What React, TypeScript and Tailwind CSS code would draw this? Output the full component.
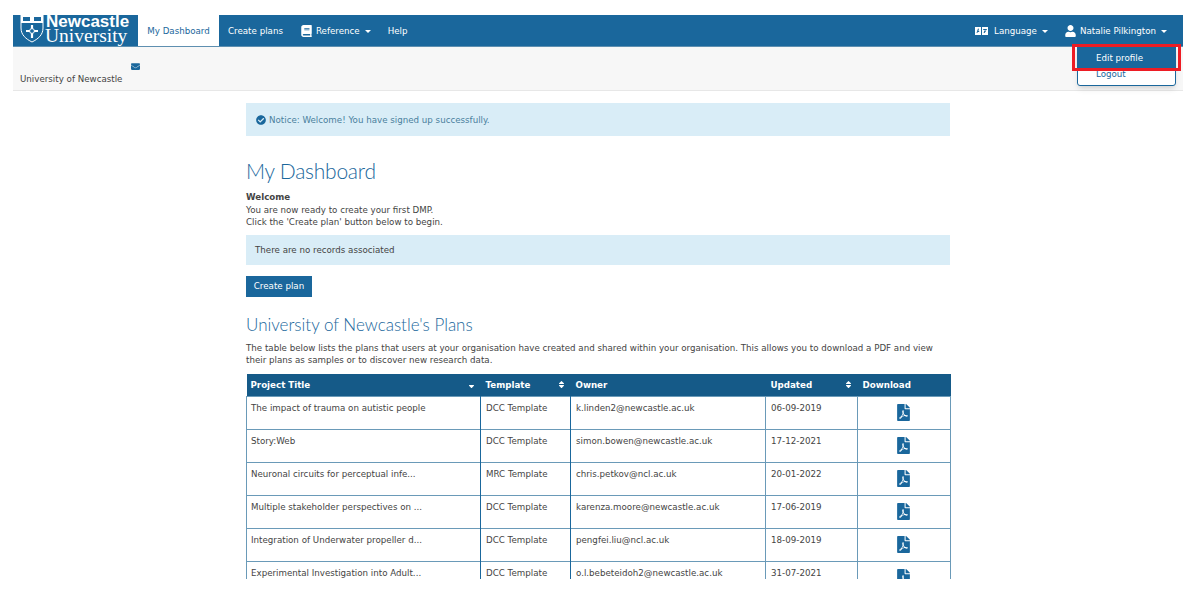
import { FaBook, FaCheckCircle, FaEnvelope, FaFilePdf, FaSort, FaSortDown, FaUser } from 'react-icons/fa';

const rows = [
  { title: 'The impact of trauma on autistic people', template: 'DCC Template', owner: 'k.linden2@newcastle.ac.uk', updated: '06-09-2019' },
  { title: 'Story:Web', template: 'DCC Template', owner: 'simon.bowen@newcastle.ac.uk', updated: '17-12-2021' },
  { title: 'Neuronal circuits for perceptual infe...', template: 'MRC Template', owner: 'chris.petkov@ncl.ac.uk', updated: '20-01-2022' },
  { title: 'Multiple stakeholder perspectives on ...', template: 'DCC Template', owner: 'karenza.moore@newcastle.ac.uk', updated: '17-06-2019' },
  { title: 'Integration of Underwater propeller d...', template: 'DCC Template', owner: 'pengfei.liu@ncl.ac.uk', updated: '18-09-2019' },
  { title: 'Experimental Investigation into Adult...', template: 'DCC Template', owner: 'o.l.bebeteidoh2@newcastle.ac.uk', updated: '31-07-2021' },
];

function Caret() {
  return <span className="ml-[5px] inline-block border-x-[3px] border-t-[3px] border-x-transparent border-t-white align-middle" />;
}

function LanguageIcon() {
  return (
    <svg className="mr-[6px]" width="13" height="8" viewBox="0 0 13 8">
      <path fillRule="evenodd" fill="white" d="M0 0H6V8H0ZM3 1.5 1.5 6H2.4L2.7 5H4.3L3.6 1.5ZM3 4 3.3 2.8 3.7 4Z" />
      <path fillRule="evenodd" fill="white" d="M7 0H13V8H7ZM8.2 2V3H11.8V2ZM9.4 3.5 8.6 6H9.6L11.4 3.5Z" />
    </svg>
  );
}

function Logo() {
  return (
    <div className="relative h-full w-[125px] shrink-0 overflow-hidden bg-[#1a679c] text-white">
      <svg className="absolute left-[7px] top-[-1px]" width="24" height="29" viewBox="0 0 24 29" fill="none">
        <path d="M1 1H23V14C23 21 18 25 12 28C6 25 1 21 1 14Z" stroke="white" strokeWidth="1" />
        <rect x="1" y="1" width="22" height="8" fill="white" />
        <path d="M3 3H10V7H3ZM14 3H21V7H14Z" fill="#1a679c" />
        <path d="M12 11V24M6 17H18" stroke="white" strokeWidth="2.2" />
        <circle cx="12" cy="17" r="2.4" stroke="white" strokeWidth="1" fill="#1a679c" />
      </svg>
      <span className="absolute left-[33px] top-[-3px] font-['Liberation_Sans',sans-serif] text-[17px] leading-[20px] font-bold whitespace-nowrap">Newcastle</span>
      <span className="absolute left-[32px] top-[11px] font-['Liberation_Serif',serif] text-[19.5px] leading-[20px] whitespace-nowrap">University</span>
    </div>
  );
}

function Navbar() {
  return (
    <nav className="flex h-[32px] items-stretch border-b border-[#5e8fb0] bg-[#1a679c] text-white">
      <Logo />
      <a className="flex w-[81px] items-center justify-center bg-white pt-[1px] text-[#1a679c]">My Dashboard</a>
      <a className="ml-[9px] flex items-center pt-[1px]">Create plans</a>
      <a className="ml-[18px] flex items-center pt-[1px]">
        <FaBook className="mr-[4px] h-[12px] w-[11px]" />
        Reference
        <Caret />
      </a>
      <a className="ml-[17px] flex items-center pt-[1px]">Help</a>
      <div className="ml-auto flex items-center pt-[1px] pr-[16px]">
        <a className="flex items-center">
          <LanguageIcon />
          Language
          <Caret />
        </a>
        <a className="ml-[17px] flex items-center">
          <FaUser className="mr-[4px] h-[12px] w-[11px]" />
          Natalie Pilkington
          <Caret />
        </a>
      </div>
    </nav>
  );
}

function Table() {
  return (
    <table className="w-[704px] table-fixed border-collapse">
      <thead>
        <tr className="h-[23px] bg-[#155a88] text-left font-bold text-white">
          <th className="w-[234px] pr-[5px] pl-[4px]">
            <div className="flex items-center justify-between">Project Title<FaSortDown className="h-[9px] w-[9px]" /></div>
          </th>
          <th className="w-[90px] px-[5px]">
            <div className="flex items-center justify-between">Template<FaSort className="h-[9px] w-[9px]" /></div>
          </th>
          <th className="w-[195px] px-[5px]">Owner</th>
          <th className="w-[92px] px-[5px]">
            <div className="flex items-center justify-between">Updated<FaSort className="h-[9px] w-[9px]" /></div>
          </th>
          <th className="w-[93px] px-[5px]">Download</th>
        </tr>
      </thead>
      <tbody>
        {rows.map((row) => (
          <tr key={row.title} className="h-[33px] border border-[#6a9ab8] align-top text-[#444]">
            <td className="border-r border-[#1a679c] pt-[5px] pr-[5px] pl-[4px]">{row.title}</td>
            <td className="border-r border-[#1a679c] px-[5px] pt-[5px]">{row.template}</td>
            <td className="border-r border-[#6a9ab8] px-[5px] pt-[5px]">{row.owner}</td>
            <td className="border-r border-[#6a9ab8] px-[5px] pt-[5px]">{row.updated}</td>
            <td className="pt-[7px] pr-[2px] text-center text-[#1a679c]">
              <FaFilePdf className="inline-block h-[17px] w-[13px]" />
            </td>
          </tr>
        ))}
      </tbody>
    </table>
  );
}

export default function App() {
  return (
    <div className="h-[595px] overflow-hidden bg-white px-[13px] pt-[15px] font-['DejaVu_Sans',sans-serif] text-[8.7px] leading-[12.5px]">
      <div className="relative h-[564px] w-[1170px] overflow-hidden">
        <Navbar />
        <div className="h-[44px] border-b border-[#e7e7e7] bg-[#f7f7f7] pl-[7px] text-[#444]">
          <div className="flex w-[121px] justify-end pt-[15px] text-[#1a679c]">
            <FaEnvelope className="h-[9px] w-[11px]" />
          </div>
          <p className="mt-[2px]">University of Newcastle</p>
        </div>

        <main className="mx-auto w-[704px] pt-[12px]">
          <div className="flex h-[33px] items-center bg-[#d9edf7] pl-[10px] text-[#4a7f9d]">
            <FaCheckCircle className="mr-[3px] h-[10px] w-[10px] text-[#1a679c]" />
            <span className="pt-[1px]">Notice: Welcome! You have signed up successfully.</span>
          </div>
          <h1 className="mt-[20px] font-['Lato',sans-serif] text-[21px] leading-[30px] font-light tracking-[-0.25px] text-[#1a679c]">My Dashboard</h1>
          <p className="mt-[5px] text-[#444]">
            <strong>Welcome</strong>
            <br />
            You are now ready to create your first DMP.
            <br />
            Click the 'Create plan' button below to begin.
          </p>
          <div className="mt-[6px] flex h-[30px] items-center bg-[#d9edf7] pt-[2px] pl-[9px] text-[#444]">There are no records associated</div>
          <button className="mt-[11px] block h-[21px] w-[66px] bg-[#1a679c] text-center text-white">Create plan</button>
          <h2 className="mt-[16px] font-['Lato',sans-serif] text-[17px] leading-[24px] font-light text-[#1a679c]">University of Newcastle's Plans</h2>
          <p className="mt-[5px] mb-[7px] text-[#444]">
            The table below lists the plans that users at your organisation have created and shared within your organisation. This allows you to download a PDF and view their plans as samples or to discover new research data.
          </p>
          <Table />
        </main>

        <div className="absolute right-[7px] top-[31px] h-[40px] w-[99px] rounded-b-[3px] border border-[#1a679c] bg-white shadow-md">
          <div className="flex h-[22px] items-center bg-[#1a679c] pl-[18px] text-white">Edit profile</div>
          <div className="-mt-[1px] pl-[18px] text-[#1a679c]">Logout</div>
        </div>
        <div className="absolute right-[2px] top-[29px] h-[27px] w-[109px] border-[3px] border-[#ed1c24]" />
      </div>
    </div>
  );
}
